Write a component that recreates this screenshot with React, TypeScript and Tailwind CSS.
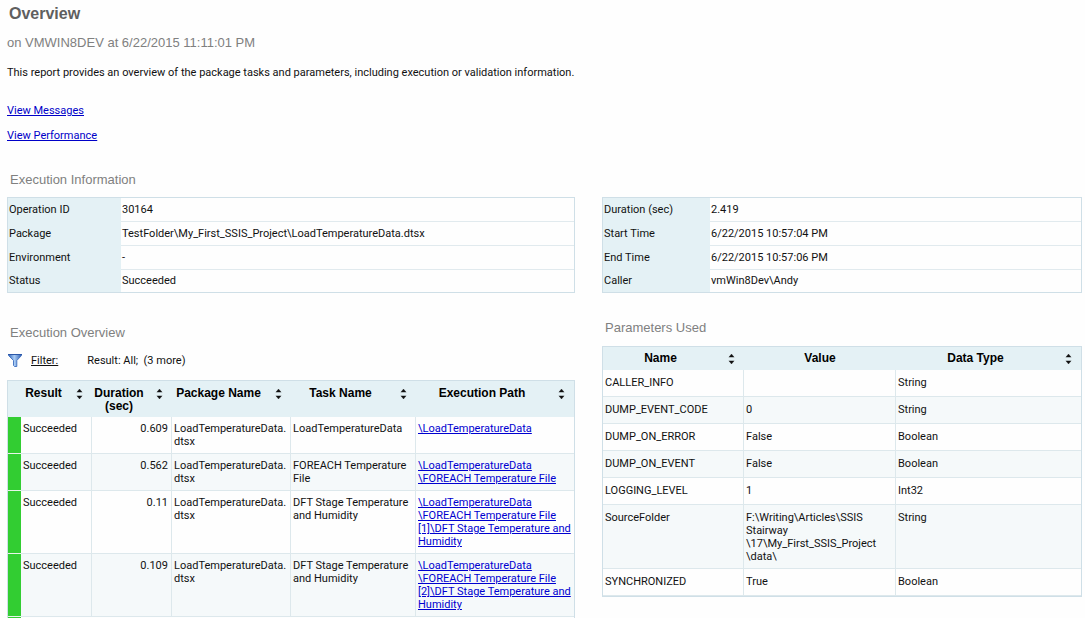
import { ReactNode } from "react"

const operationInfo = [
  ["Operation ID", "30164"],
  ["Package", "TestFolder\\My_First_SSIS_Project\\LoadTemperatureData.dtsx"],
  ["Environment", "-"],
  ["Status", "Succeeded"],
]

const timingInfo = [
  ["Duration (sec)", "2.419"],
  ["Start Time", "6/22/2015 10:57:04 PM"],
  ["End Time", "6/22/2015 10:57:06 PM"],
  ["Caller", "vmWin8Dev\\Andy"],
]

const executions = [
  {
    duration: "0.609",
    task: ["LoadTemperatureData"],
    path: ["\\LoadTemperatureData"],
  },
  {
    duration: "0.562",
    task: ["FOREACH Temperature", "File"],
    path: ["\\LoadTemperatureData", "\\FOREACH Temperature File"],
  },
  {
    duration: "0.11",
    task: ["DFT Stage Temperature", "and Humidity"],
    path: ["\\LoadTemperatureData", "\\FOREACH Temperature File", "[1]\\DFT Stage Temperature and", "Humidity"],
  },
  {
    duration: "0.109",
    task: ["DFT Stage Temperature", "and Humidity"],
    path: ["\\LoadTemperatureData", "\\FOREACH Temperature File", "[2]\\DFT Stage Temperature and", "Humidity"],
  },
]

const parameters = [
  { name: "CALLER_INFO", value: [""], type: "String" },
  { name: "DUMP_EVENT_CODE", value: ["0"], type: "String" },
  { name: "DUMP_ON_ERROR", value: ["False"], type: "Boolean" },
  { name: "DUMP_ON_EVENT", value: ["False"], type: "Boolean" },
  { name: "LOGGING_LEVEL", value: ["1"], type: "Int32" },
  {
    name: "SourceFolder",
    value: ["F:\\Writing\\Articles\\SSIS", "Stairway", "\\17\\My_First_SSIS_Project", "\\data\\"],
    type: "String",
  },
  { name: "SYNCHRONIZED", value: ["True"], type: "Boolean" },
]

function Lines({ items }: { items: string[] }) {
  return (
    <>
      {items.map((line) => (
        <span key={line} className="block whitespace-nowrap">
          {line}
        </span>
      ))}
    </>
  )
}

function SortButton({ label }: { label: string }) {
  return (
    <button type="button" aria-label={`Sort by ${label}`} className="flex w-[26px] shrink-0 justify-center pt-px">
      <svg width="7" height="12" viewBox="0 0 7 12">
        <path d="M3.5 1 L6 4 H1 Z M3.5 11 L6 8 H1 Z" fill="#111" stroke="#111" strokeWidth="0.3" />
        <path d="M0.5 4.5 H6.5 M0.5 7.5 H6.5" stroke="#9aa5a9" strokeOpacity="0.5" />
      </svg>
    </button>
  )
}

function HeadCell({ label, sortable = true, children }: { label: string; sortable?: boolean; children?: ReactNode }) {
  return (
    <div className="flex items-start font-['Liberation_Sans',Arial,sans-serif] text-xs leading-[13px] font-bold text-black">
      <span className="flex-1 text-center">{children ?? label}</span>
      {sortable && <SortButton label={label} />}
    </div>
  )
}

function InfoTable({ rows, labelWidth }: { rows: string[][]; labelWidth: string }) {
  return (
    <table className="h-24 w-full table-fixed border-separate border-spacing-0 border border-[#cfdfe7]">
      <tbody>
        {rows.map(([label, value], i) => (
          <tr key={label}>
            <th scope="row" className={`${labelWidth} bg-[#e4f1f5] py-0 pl-px text-left font-normal`}>
              {label}
            </th>
            <td className={`py-0 pl-px ${i < rows.length - 1 ? "border-b border-[#e1eaee]" : ""}`}>{value}</td>
          </tr>
        ))}
      </tbody>
    </table>
  )
}

function FilterIcon() {
  return (
    <svg width="14" height="13" viewBox="0 0 14 13">
      <defs>
        <linearGradient id="funnel" x1="0" x2="1">
          <stop offset="0" stopColor="#2f62b8" />
          <stop offset="0.45" stopColor="#a9ccf5" />
          <stop offset="1" stopColor="#2c5cb0" />
        </linearGradient>
      </defs>
      <path d="M0.5 0.5 H13.5 V1.5 L8.8 6.5 V12.5 H6.5 L5.5 11.5 V6.5 L0.5 1.5 Z" fill="url(#funnel)" stroke="#4a78c4" />
      <path d="M0 0.5 H14" stroke="#2b57a8" />
    </svg>
  )
}

const headCell = "bg-[#e4f1f5] p-0 align-top"
const cell = "border-b border-[#dde8ec] pl-0.5 align-top"
const split = "border-r border-[#dde8ec]"

export default function App() {
  return (
    <main className="min-h-screen bg-[#fefefe] pr-[3px] pl-[7px] font-['Roboto','Liberation_Sans',sans-serif] text-[11px] leading-[13px] text-[#111]">
      <header className="font-['Liberation_Sans',Arial,sans-serif] text-[13px] text-[#808080]">
        <h1 className="pt-1 pl-0.5 text-base leading-5 font-bold text-[#5f5f5f]">Overview</h1>
        <p className="pt-[11px] leading-4">on VMWIN8DEV at 6/22/2015 11:11:01 PM</p>
      </header>
      <p className="pt-[15px]">
        This report provides an overview of the package tasks and parameters, including execution or validation
        information.
      </p>
      <nav className="flex flex-col items-start gap-3 pt-[25px] text-[#0000c8] underline">
        <a href="#messages">View Messages</a>
        <a href="#performance">View Performance</a>
      </nav>

      <h2 className="pt-[30px] pb-[9px] pl-[3px] font-['Liberation_Sans',Arial,sans-serif] text-[13px] leading-4 text-[#808080]">
        Execution Information
      </h2>

      <div className="grid grid-cols-[568fr_480fr] items-start gap-x-[27px]">
        <section>
          <InfoTable rows={operationInfo} labelWidth="w-[113px]" />

          <h2 className="pt-8 pl-[3px] font-['Liberation_Sans',Arial,sans-serif] text-[13px] leading-4 text-[#808080]">
            Execution Overview
          </h2>
          <div className="flex h-[39px] items-center pl-px">
            <FilterIcon />
            <a href="#filter" className="ml-[9px] underline">
              Filter:
            </a>
            <span className="ml-[29px] whitespace-pre">Result: All;  (3 more)</span>
          </div>

          <table className="w-full table-fixed border-separate border-spacing-0 border-x border-t border-[#cfdfe7]">
            <colgroup>
              <col className="w-[13px]" />
              <col className="w-[71px]" />
              <col className="w-[80px]" />
              <col className="w-[119px]" />
              <col className="w-[125px]" />
              <col />
            </colgroup>
            <thead>
              <tr className="h-9">
                <td className={headCell} />
                <th scope="col" className={`${headCell} pt-1.5`}>
                  <HeadCell label="Result" />
                </th>
                <th scope="col" className={`${headCell} pt-1.5`}>
                  <HeadCell label="Duration">
                    Duration
                    <br />
                    (sec)
                  </HeadCell>
                </th>
                <th scope="col" className={`${headCell} pt-1.5`}>
                  <HeadCell label="Package Name" />
                </th>
                <th scope="col" className={`${headCell} pt-1.5`}>
                  <HeadCell label="Task Name" />
                </th>
                <th scope="col" className={`${headCell} pt-1.5`}>
                  <HeadCell label="Execution Path" />
                </th>
              </tr>
            </thead>
            <tbody>
              {executions.map((row) => (
                <tr key={row.duration} className="even:bg-[#f5f9fa]">
                  <td className="border-b border-[#e8f5ea] bg-[#32cd32] bg-clip-padding" />
                  <td className={`${cell} ${split} py-[5px]`}>Succeeded</td>
                  <td className={`${cell} ${split} py-[5px] pr-[3px] text-right`}>{row.duration}</td>
                  <td className={`${cell} ${split} py-[5px]`}>
                    <Lines items={["LoadTemperatureData.", "dtsx"]} />
                  </td>
                  <td className={`${cell} ${split} py-[5px]`}>
                    <Lines items={row.task} />
                  </td>
                  <td className={`${cell} py-[5px]`}>
                    <a href="#path" className="text-[#0000d0] underline">
                      <Lines items={row.path} />
                    </a>
                  </td>
                </tr>
              ))}
              <tr className="h-px">
                <td className="bg-[#32cd32] p-0" />
                <td colSpan={5} className="p-0" />
              </tr>
            </tbody>
          </table>
        </section>

        <section>
          <InfoTable rows={timingInfo} labelWidth="w-[107px]" />

          <h2 className="pt-[27px] pb-[10px] pl-[3px] font-['Liberation_Sans',Arial,sans-serif] text-[13px] leading-4 text-[#808080]">
            Parameters Used
          </h2>
          <table className="w-full table-fixed border-separate border-spacing-0 border border-[#cfdfe7]">
            <colgroup>
              <col className="w-[141px]" />
              <col className="w-[152px]" />
              <col />
            </colgroup>
            <thead>
              <tr className="h-[23px]">
                <th scope="col" className={`${headCell} pt-[5px]`}>
                  <HeadCell label="Name" />
                </th>
                <th scope="col" className={`${headCell} pt-[5px]`}>
                  <HeadCell label="Value" sortable={false} />
                </th>
                <th scope="col" className={`${headCell} pt-[5px]`}>
                  <HeadCell label="Data Type" />
                </th>
              </tr>
            </thead>
            <tbody>
              {parameters.map((param) => (
                <tr key={param.name} className="h-[27px] even:bg-[#f5f9fa]">
                  <td className={`${cell} ${split} pt-1.5 pb-[5px]`}>{param.name}</td>
                  <td className={`${cell} ${split} pt-1.5 pb-[5px]`}>
                    <Lines items={param.value} />
                  </td>
                  <td className={`${cell} pt-1.5 pb-[5px]`}>{param.type}</td>
                </tr>
              ))}
            </tbody>
          </table>
        </section>
      </div>
    </main>
  )
}
